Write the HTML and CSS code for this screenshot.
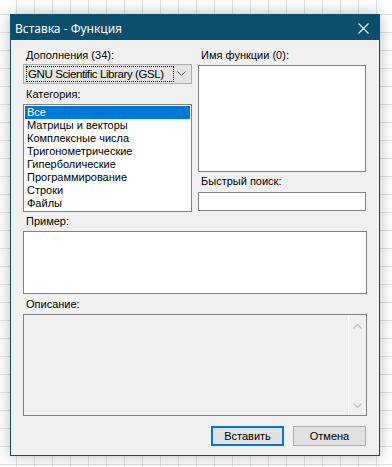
FILE: index.html
```html
<!DOCTYPE html>
<html lang="ru">
<head>
  <meta charset="UTF-8" />
  <meta name="viewport" content="width=device-width, initial-scale=1" />
  <title>Вставка - Функция</title>
  <link rel="stylesheet" href="styles.css">
</head>
<body>

<div class="dialog">
  <div class="titlebar">
    <span class="title">Вставка - Функция</span>
    <svg class="close" width="11" height="11" viewBox="0 0 11 11">
      <path d="M0.5 0.5 L10.5 10.5 M10.5 0.5 L0.5 10.5" stroke="#fff" stroke-width="1.1" fill="none" />
    </svg>
  </div>

  <div class="content">
    <div class="top">
      <div class="col">
        <div class="label">Дополнения (34):</div>
        <div class="combo">
          <span class="combo-text">GNU Scientific Library (GSL)</span>
          <svg class="combo-arrow" width="9" height="6" viewBox="0 0 9 6">
            <path d="M0.5 0.5 L4.5 4.5 L8.5 0.5" stroke="#555" stroke-width="1" fill="none" />
          </svg>
        </div>
        <div class="label label-cat">Категория:</div>
        <div class="listbox cat-list">
          <div class="item selected">Все</div>
          <div class="item">Матрицы и векторы</div>
          <div class="item">Комплексные числа</div>
          <div class="item">Тригонометрические</div>
          <div class="item">Гиперболические</div>
          <div class="item">Программирование</div>
          <div class="item">Строки</div>
          <div class="item">Файлы</div>
        </div>
      </div>

      <div class="col">
        <div class="label label-func">Имя функции (0):</div>
        <div class="listbox func-list"></div>
        <div class="label label-search">Быстрый поиск:</div>
        <div class="textbox"></div>
      </div>
    </div>

    <div class="label label-example">Пример:</div>
    <div class="listbox example-box"></div>

    <div class="label label-desc">Описание:</div>
    <div class="desc-box">
      <div class="desc-text"></div>
      <div class="scrollbar">
        <svg width="9" height="6" viewBox="0 0 9 6">
          <path d="M0.5 5.5 L4.5 1.5 L8.5 5.5" stroke="#c3c3c3" stroke-width="1.3" fill="none" />
        </svg>
        <svg width="9" height="6" viewBox="0 0 9 6">
          <path d="M0.5 0.5 L4.5 4.5 L8.5 0.5" stroke="#c3c3c3" stroke-width="1.3" fill="none" />
        </svg>
      </div>
    </div>

    <div class="buttons">
      <button class="btn btn-default">Вставить</button>
      <button class="btn">Отмена</button>
    </div>
  </div>
</div>

</body>
</html>
```

FILE: styles.css
```css
body {
  margin: 0;
  padding: 0;
  height: 467px;
  overflow: hidden;
  background-color: #ffffff;
  background-image:
    linear-gradient(to right, #e2e2e2 1px, transparent 1px),
    linear-gradient(to bottom, #e2e2e2 1px, transparent 1px);
  background-size: 18px 18px;
  background-position: 16px 14px;
  font-family: "Liberation Sans", Arial, sans-serif;
  font-size: 11px;
  color: #000;
}
.dialog {
  margin: 14px 0 0 10px;
  width: 368px;
  height: 440px;
  border: 1px solid #0c4f6d;
  background-color: #f0f0f0;
  box-shadow: 0 0 14px rgba(0, 0, 0, 0.28);
  display: flex;
  flex-direction: column;
}
.titlebar {
  height: 25px;
  background-color: #0c4f6d;
  display: flex;
  align-items: center;
  justify-content: space-between;
  padding: 0 10px 0 4px;
}
.title {
  font-family: "Noto Sans", "Liberation Sans", sans-serif;
  font-size: 12px;
  color: #fff;
  padding-top: 1px;
}
.close {
  display: block;
  margin-top: 1px;
}
.content {
  padding: 9px 12px 0 12px;
}
.top {
  display: flex;
  gap: 6px;
}
.col {
  display: flex;
  flex-direction: column;
  width: 169px;
}
.col + .col {
  width: 168px;
}
.label {
  height: 13px;
  line-height: 13px;
  padding-left: 3px;
  margin-bottom: 2px;
}
.label-cat {
  margin-top: 4px;
  margin-bottom: 3px;
}
.label-func {
  margin-bottom: 3px;
}
.label-search {
  margin-top: 3px;
  margin-bottom: 4px;
}
.label-example {
  margin-top: 3px;
  margin-bottom: 3px;
}
.label-desc {
  margin-top: 4px;
  margin-bottom: 3px;
}
.combo {
  box-sizing: border-box;
  height: 20px;
  border: 1px solid #adadad;
  background-color: #e5e5e5;
  display: flex;
  align-items: center;
  justify-content: space-between;
  padding: 0 5px 0 2px;
}
.combo-text {
  box-sizing: border-box;
  font-size: 11.5px;
  letter-spacing: -0.4px;
  line-height: 14px;
  padding: 0 1px;
  border: 1px dotted #000;
  width: 148px;
  white-space: nowrap;
  overflow: hidden;
}
.combo-arrow {
  display: block;
}
.listbox {
  box-sizing: border-box;
  border: 1px solid #828282;
  background-color: #fff;
}
.cat-list {
  height: 108px;
  padding: 1px;
}
.item {
  height: 13px;
  line-height: 13px;
  padding-left: 2px;
  white-space: nowrap;
}
.selected {
  background-color: #0078d7;
  color: #fff;
}
.func-list {
  height: 107px;
}
.textbox {
  box-sizing: border-box;
  height: 19px;
  border: 1px solid #828282;
  background-color: #fff;
}
.example-box {
  width: 344px;
  height: 63px;
}
.desc-box {
  box-sizing: border-box;
  width: 344px;
  height: 102px;
  border: 1px solid #828282;
  background-color: #f0f0f0;
  display: flex;
}
.desc-text {
  flex: 1;
}
.scrollbar {
  width: 17px;
  border-left: 1px solid #fff;
  display: flex;
  flex-direction: column;
  justify-content: space-between;
  align-items: center;
  padding: 8px 0 6px 0;
}
.scrollbar svg {
  display: block;
}
.buttons {
  display: flex;
  justify-content: flex-end;
  gap: 9px;
  margin-top: 10px;
  padding-right: 1px;
}
.btn {
  box-sizing: border-box;
  width: 73px;
  height: 20px;
  border: 1px solid #adadad;
  background-color: #e1e1e1;
  font-family: "Liberation Sans", Arial, sans-serif;
  font-size: 11px;
  color: #000;
  padding: 0;
}
.btn-default {
  border: 2px solid #0078d7;
}
```
